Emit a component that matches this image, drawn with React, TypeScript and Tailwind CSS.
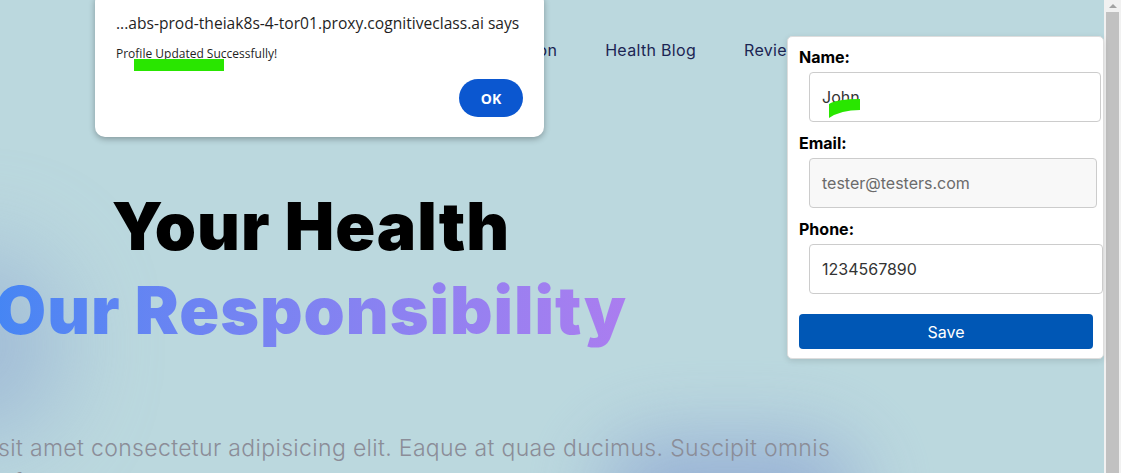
import React from "react";

const navItems = ["Home", "Consultation", "Health Blog", "Reviews"];

function Field({
  label,
  value,
  width,
  muted,
}: {
  label: string;
  value: string;
  width: string;
  muted?: boolean;
}) {
  return (
    <div className="flex flex-col">
      <label className="text-[16px] leading-[24px] font-bold text-black">{label}</label>
      <div
        className={`ml-[10px] mt-[3px] h-[50px] ${width} flex items-center rounded-[4px] border border-[#cccccc] px-[12px] text-[16px] ${
          muted ? "bg-[#f8f8f8] text-[#6b6b6b]" : "bg-white text-[#333333]"
        }`}
      >
        {value}
      </div>
    </div>
  );
}

export default function App() {
  return (
    <div className="relative flex h-[473px] w-[1121px] overflow-hidden font-['Inter',sans-serif]">
      <div className="relative h-full w-[1104px] overflow-hidden bg-[#bbd8de]">
        {/* soft background blobs */}
        <div className="absolute left-[-110px] top-[250px] h-[190px] w-[170px] rounded-full bg-[#94aed3] opacity-70 blur-[50px]" />
        <div className="absolute left-[600px] top-[440px] h-[110px] w-[260px] rounded-full bg-[#93acd4] opacity-90 blur-[40px]" />

        <header className="relative flex h-[100px] items-center">
          <ul className="ml-[364px] flex items-center gap-[48px] text-[16px] tracking-[0.02em] text-[#1b2553]">
            {navItems.map((item) => (
              <li key={item}>{item}</li>
            ))}
          </ul>
          <button className="ml-auto mr-[34px] mt-[18px] h-[40px] w-[78px] rounded-full border-2 border-[#3b82f6] bg-[#eaedf3] text-[15px] text-[#3b82f6]">
            Login
          </button>
        </header>

        <section className="relative">
          <div className="ml-[-90px] mt-[84px] w-[802px] text-center text-[66px] font-black leading-[84px] tracking-[0.015em]">
            <h1 className="text-black">Your Health</h1>
            <h1 className="bg-gradient-to-r from-[#2a86f4] to-[#b57bef] bg-clip-text text-transparent">
              Our Responsibility
            </h1>
          </div>
          <p className="ml-[-215px] mt-[79px] whitespace-nowrap text-[23px] font-light leading-[34px] tracking-[0.015em] text-[#8b8d98]">
            <span className="block">
              Lorem ipsum dolor sit amet consectetur adipisicing elit. Eaque at quae ducimus. Suscipit omnis
            </span>
            <span className="block">
              delectus quibusdam fugit libero nihil, placeat ipsa voluptate dolorem illum.
            </span>
          </p>
        </section>
      </div>

      {/* scrollbar */}
      <div className="flex h-full w-[17px] flex-col items-center bg-[#f1f1f1]">
        <div className="flex h-[12px] w-full items-center justify-center">
          <div className="h-0 w-0 border-x-[4px] border-b-[4px] border-x-transparent border-b-[#a3a3a3]" />
        </div>
        <div className="w-[13px] flex-1 bg-[#c1c1c1]" />
      </div>

      {/* browser alert */}
      <div className="absolute left-[95px] top-[-8px] h-[145px] w-[449px] rounded-[10px] bg-white shadow-[0_2px_6px_rgba(0,0,0,0.3)] font-['Open_Sans',sans-serif]">
        <div className="ml-[21px] mt-[20px] text-[15.6px] leading-[22px] text-[#1f1f1f]">
          ...abs-prod-theiak8s-4-tor01.proxy.cognitiveclass.ai says
        </div>
        <div className="relative ml-[21px] mt-[12px] text-[12px] leading-[16px] text-[#1f1f1f]">
          Profile Updated Successfully!
          <span className="absolute left-[18px] top-[13px] h-[12px] w-[90px] bg-[#29e600]" />
        </div>
        <div className="mr-[21px] mt-[17px] flex justify-end">
          <button className="h-[38px] w-[64px] rounded-full bg-[#0b57d0] text-[14px] font-bold text-white">
            OK
          </button>
        </div>
      </div>

      {/* profile dropdown */}
      <div className="absolute left-[787px] top-[36px] h-[323px] w-[317px] rounded-[5px] border border-[#dddddd] bg-white px-[11px] pt-[8px] shadow-[0_2px_6px_rgba(0,0,0,0.12)]">
        <div className="flex flex-col gap-[9px]">
          <Field label="Name:" value="John" width="w-[292px]" />
          <Field label="Email:" value="tester@testers.com" width="w-[288px]" muted />
          <Field label="Phone:" value="1234567890" width="w-[294px]" />
        </div>
        <button className="mt-[20px] h-[35px] w-[294px] rounded-[4px] bg-[#0057b5] text-[16px] text-white">
          Save
        </button>
      </div>

      {/* green marker stroke */}
      <svg className="absolute left-[829px] top-[99px]" width="32" height="20" viewBox="0 0 32 20">
        <path d="M0 5 Q8 0 31 0 L31 11 Q12 11 0 19 Z" fill="#29e600" />
      </svg>
    </div>
  );
}
